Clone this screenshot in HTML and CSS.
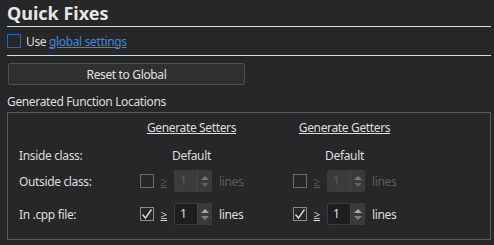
FILE: index.html
```html
<!DOCTYPE html>
<html lang="en">
<head>
  <meta charset="UTF-8">
  <link rel="stylesheet" href="styles.css">
  <title>Quick Fixes</title>
</head>
<body>
  <div class="page">
    <h1 class="title">Quick Fixes</h1>

    <div class="use-row">
      <span class="check check-focus"></span>
      <span>Use <a href="#" class="link">global settings</a></span>
    </div>

    <div class="reset-row">
      <button class="btn">Reset to Global</button>
    </div>

    <div class="group-title">Generated Function Locations</div>

    <div class="group">
      <div class="cell"></div>
      <div class="cell center"><span class="col-head">Generate Setters</span></div>
      <div class="cell center"><span class="col-head">Generate Getters</span></div>

      <div class="cell">Inside class:</div>
      <div class="cell center">Default</div>
      <div class="cell center">Default</div>

      <div class="cell">Outside class:</div>
      <div class="cell center controls disabled">
        <span class="check"></span>
        <span class="ge">&ge;</span>
        <span class="spin"><span class="spin-val">1</span><span class="spin-btns"><i class="up"></i><i class="down"></i></span></span>
        <span>lines</span>
      </div>
      <div class="cell center controls disabled">
        <span class="check"></span>
        <span class="ge">&ge;</span>
        <span class="spin"><span class="spin-val">1</span><span class="spin-btns"><i class="up"></i><i class="down"></i></span></span>
        <span>lines</span>
      </div>

      <div class="cell">In .cpp file:</div>
      <div class="cell center controls">
        <span class="check checked"><svg width="12" height="12" viewBox="0 0 12 12"><path d="M1.5 6.5 L4.5 10 L10.5 1.5" fill="none" stroke="#d8d8d8" stroke-width="1.4"/></svg></span>
        <span class="ge">&ge;</span>
        <span class="spin"><span class="spin-val">1</span><span class="spin-btns"><i class="up"></i><i class="down"></i></span></span>
        <span>lines</span>
      </div>
      <div class="cell center controls">
        <span class="check checked"><svg width="12" height="12" viewBox="0 0 12 12"><path d="M1.5 6.5 L4.5 10 L10.5 1.5" fill="none" stroke="#d8d8d8" stroke-width="1.4"/></svg></span>
        <span class="ge">&ge;</span>
        <span class="spin"><span class="spin-val">1</span><span class="spin-btns"><i class="up"></i><i class="down"></i></span></span>
        <span>lines</span>
      </div>
    </div>
  </div>
</body>
</html>
```

FILE: styles.css
```css
body {
  margin: 0;
  padding: 0;
  background-color: #262729;
  color: #dedede;
  font-family: "Noto Sans", "Open Sans", sans-serif;
  font-size: 12px;
  letter-spacing: -0.35px;
}

.page {
  padding: 0 3px 0 7px;
  width: 484px;
}

.title {
  margin: 0;
  padding-top: 1px;
  height: 25px;
  line-height: 25px;
  font-size: 18px;
  font-weight: bold;
  letter-spacing: 0;
  color: #e6e6e6;
  border-bottom: 1px solid #dcdcdc;
}

.use-row {
  display: flex;
  align-items: center;
  gap: 5px;
  height: 28px;
  border-bottom: 1px solid #dcdcdc;
}

.link {
  color: #2f8be6;
}

.check {
  box-sizing: border-box;
  width: 14px;
  height: 14px;
  border: 1px solid #8c8c8c;
  display: inline-flex;
  align-items: center;
  justify-content: center;
}

.check-focus {
  border-color: #2868b8;
}

.reset-row {
  padding: 7px 0 0 1px;
}

.btn {
  display: block;
  width: 237px;
  height: 22px;
  background-color: #303030;
  border: 1px solid #4e4e4e;
  border-radius: 2px;
  color: #e0e0e0;
  font-family: inherit;
  font-size: 12px;
  letter-spacing: -0.35px;
  padding: 0;
}

.group-title {
  height: 26px;
  line-height: 34px;
}

.group {
  box-sizing: border-box;
  margin-top: 1px;
  height: 128px;
  border: 1px solid #5c5c5c;
  padding: 3px 0 0 11px;
  display: grid;
  grid-template-columns: 96px 153px 153px;
  grid-template-rows: 28px 26px 33px 22px;
  align-items: start;
}

.cell {
  height: 22px;
  display: flex;
  align-items: center;
}

.center {
  justify-content: center;
}

.col-head {
  text-decoration: underline;
}

.controls {
  gap: 7px;
}

.ge {
  text-decoration: underline;
  text-underline-offset: 1px;
}

.spin {
  box-sizing: border-box;
  width: 38px;
  height: 22px;
  border: 1px solid #3c3c3c;
  border-radius: 2px;
  background-color: #1d1e1f;
  display: flex;
}

.spin-val {
  flex: 1;
  padding-left: 5px;
  line-height: 20px;
}

.spin-btns {
  width: 13px;
  background-color: #3a3a3a;
  border-left: 1px solid #454545;
  display: flex;
  flex-direction: column;
  align-items: center;
  justify-content: center;
  gap: 3px;
}

.up,
.down {
  width: 0;
  height: 0;
  border-left: 4px solid transparent;
  border-right: 4px solid transparent;
}

.up {
  border-bottom: 4px solid #a8a8a8;
}

.down {
  border-top: 4px solid #808080;
}

.disabled {
  color: #5c5c5c;
}

.disabled .check {
  border-color: #6a6a6a;
}

.disabled .spin {
  background-color: #3b3b3b;
}

.disabled .up {
  border-bottom-color: #777;
}

.disabled .down {
  border-top-color: #606060;
}
```
